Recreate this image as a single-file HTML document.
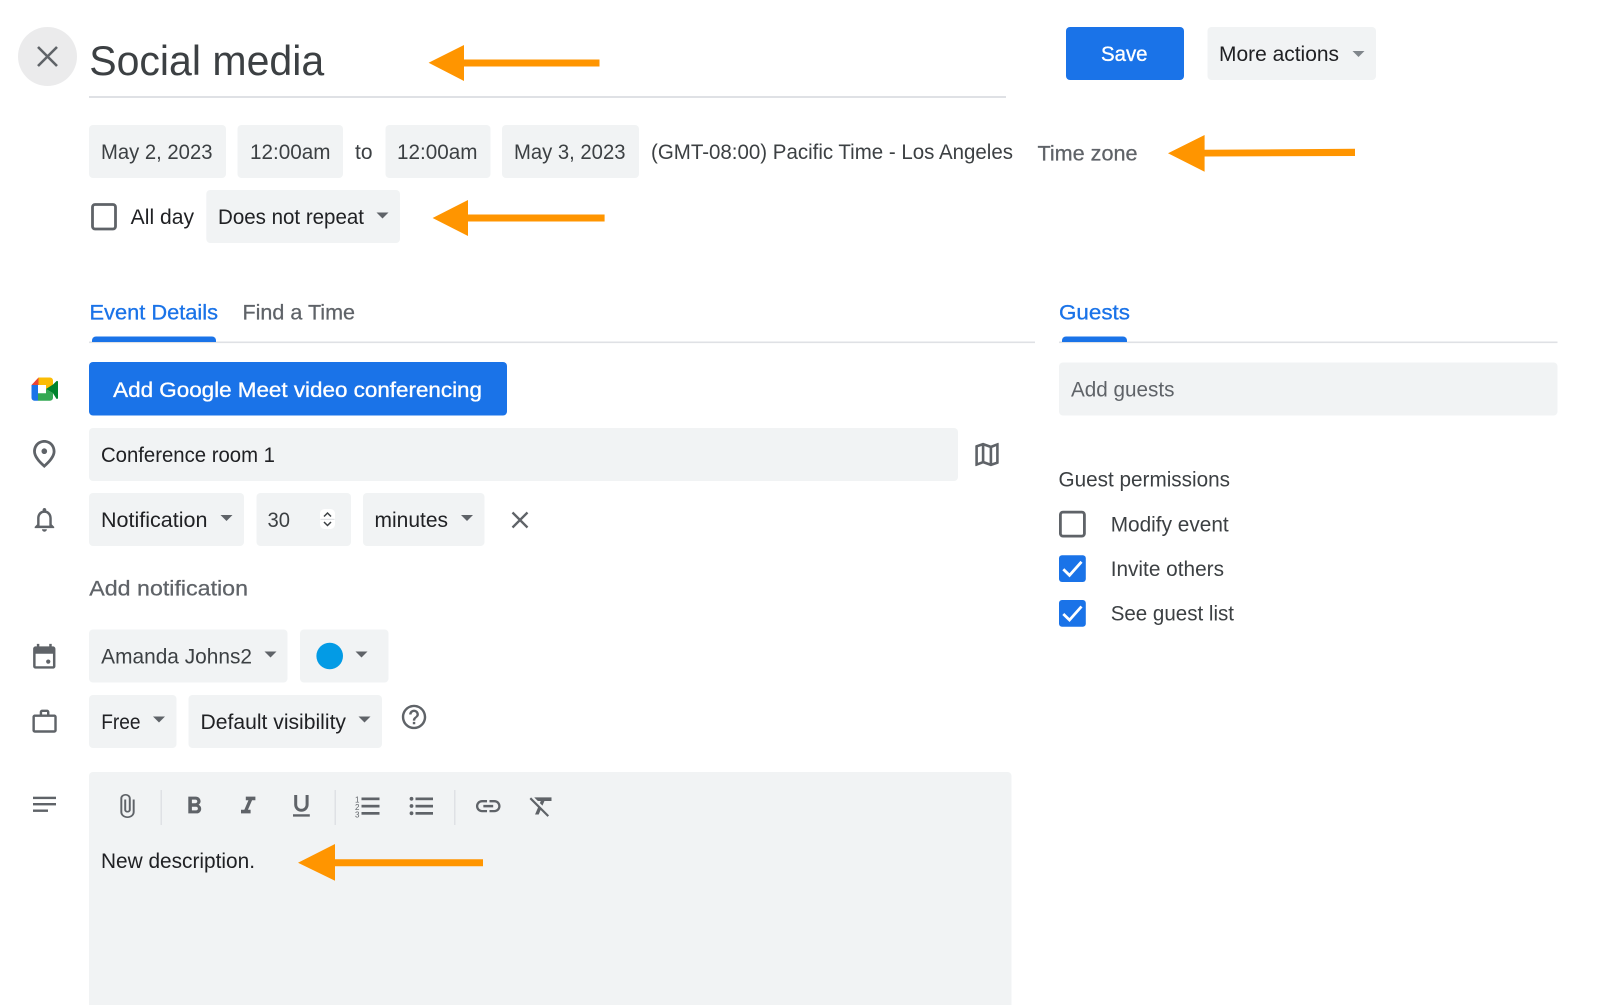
<!DOCTYPE html>
<html lang="en"><head><meta charset="utf-8"><title>Social media</title>
<style>
html,body{margin:0;padding:0;background:#fff;width:1600px;height:1005px;overflow:hidden}
svg{display:block;filter:blur(.35px)}
text{font-family:"Liberation Sans",sans-serif;font-size:20.8px;fill:#3c4043;white-space:pre}
.d{fill:#202124}.g{fill:#5f6368}.b{fill:#1a73e8;stroke:#1a73e8;stroke-width:.3}.w{fill:#fff;stroke:#fff;stroke-width:.35}
.m{stroke:#5f6368;stroke-width:.25}
.c{fill:#f1f3f4}.i{fill:#5f6368}.o{fill:#ff9500}.l{fill:#dfe1e5}
</style></head><body>
<svg width="1600" height="1005" viewBox="0 0 1600 1005" xmlns="http://www.w3.org/2000/svg">
<rect width="1600" height="1005" fill="#fff"/>

<!-- header -->
<circle cx="47.5" cy="56.5" r="29.5" fill="#ebebec"/>
<path d="M38 47l19 19M57 47L38 66" stroke="#5f6368" stroke-width="2.6" fill="none"/>
<text x="89.2" y="75" style="font-size:41.5px" textLength="235" lengthAdjust="spacingAndGlyphs">Social media</text>
<rect x="89" y="96" width="917" height="2" class="l"/>
<rect x="1066" y="27" width="118" height="53" rx="4" fill="#1a73e8"/>
<text x="1101" y="61" class="w" textLength="46.5" lengthAdjust="spacingAndGlyphs">Save</text>
<rect x="1207.500" y="27" width="168.500" height="53" rx="4" class="c"/>
<text x="1219" y="61" class="d" textLength="120" lengthAdjust="spacingAndGlyphs">More actions</text>
<path d="M1352.5 51h12l-6 6z" fill="#80868b"/>

<!-- date row -->
<rect x="89" y="125" width="137" height="53" rx="4" class="c"/>
<text x="101" y="159" textLength="111.5" lengthAdjust="spacingAndGlyphs">May 2, 2023</text>
<rect x="237.500" y="125" width="105.500" height="53" rx="4" class="c"/>
<text x="250" y="159" textLength="80.5" lengthAdjust="spacingAndGlyphs">12:00am</text>
<text x="355" y="159" textLength="17.5" lengthAdjust="spacingAndGlyphs">to</text>
<rect x="385.500" y="125" width="105" height="53" rx="4" class="c"/>
<text x="397" y="159" textLength="80.5" lengthAdjust="spacingAndGlyphs">12:00am</text>
<rect x="502" y="125" width="137" height="53" rx="4" class="c"/>
<text x="514" y="159" textLength="111.5" lengthAdjust="spacingAndGlyphs">May 3, 2023</text>
<text x="651" y="159" textLength="362" lengthAdjust="spacingAndGlyphs">(GMT-08:00) Pacific Time - Los Angeles</text>
<text x="1037.5" y="160.500" class="g m" textLength="100" lengthAdjust="spacingAndGlyphs">Time zone</text>

<!-- all day row -->
<rect x="92.5" y="204.5" width="23" height="24.5" rx="2.5" fill="none" stroke="#5f6368" stroke-width="2.8"/>
<text x="130.700" y="224" class="d" textLength="63.300" lengthAdjust="spacingAndGlyphs">All day</text>
<rect x="206.300" y="190" width="193.700" height="53" rx="4" class="c"/>
<text x="218" y="224" class="d" textLength="146" lengthAdjust="spacingAndGlyphs">Does not repeat</text>
<path d="M376.5 212.5h12l-6 6z" class="i"/>

<!-- tabs -->
<text x="89.500" y="319.5" class="b" textLength="128.500" lengthAdjust="spacingAndGlyphs">Event Details</text>
<text x="242.500" y="319.5" class="g m" textLength="112.500" lengthAdjust="spacingAndGlyphs">Find a Time</text>
<rect x="89" y="341.5" width="946" height="1.600" class="l"/>
<path d="M92 342v-1.5a4 4 0 0 1 4-4h116a4 4 0 0 1 4 4v1.5z" fill="#1a73e8"/>
<text x="1059" y="319.5" class="b" textLength="71" lengthAdjust="spacingAndGlyphs">Guests</text>
<rect x="1059" y="341.5" width="498.5" height="1.600" class="l"/>
<path d="M1062 342v-1.5a4 4 0 0 1 4-4h57a4 4 0 0 1 4 4v1.5z" fill="#1a73e8"/>

<!-- meet -->
<path d="M31.5 385l7-7.500v7.500z" fill="#ea4335"/>
<path d="M31.5 385h6.500v15.700h-3.500a3 3 0 0 1-3-3z" fill="#1a73e8"/>
<path d="M38.500 377.500H50a3 3 0 0 1 3 3v4.500l-7 4.500v-4.500H38.500z" fill="#fbbc04"/>
<path d="M38 393.300H46V389l7 4.300v4.400a3 3 0 0 1-3 3H38z" fill="#34a853"/>
<path d="M46 389l7-4.500 3.300-3.300c.7-.7 1.700-.3 1.700 .8v15.800c0 1.100-1 1.500-1.700 .8L53 393.300z" fill="#00832d"/>
<rect x="89" y="362" width="418" height="53.5" rx="4" fill="#1a73e8"/>
<text x="113.200" y="396.800" class="w" textLength="368.800" lengthAdjust="spacingAndGlyphs">Add Google Meet video conferencing</text>

<!-- location -->
<path transform="translate(27.5 437.200) scale(1.4)" class="i" d="M12 12c-1.1 0-2-.9-2-2s.9-2 2-2 2 .9 2 2-.9 2-2 2zm6-1.8C18 6.57 15.35 4 12 4s-6 2.57-6 6.2c0 2.34 1.95 5.44 6 9.14 4.05-3.7 6-6.8 6-9.14zM12 2c4.2 0 8 3.22 8 8.2 0 3.32-2.67 7.25-8 11.8-5.33-4.55-8-8.48-8-11.8C4 5.22 7.8 2 12 2z"/>
<rect x="89" y="428" width="869" height="53" rx="4" class="c"/>
<text x="101" y="462" class="d" textLength="174" lengthAdjust="spacingAndGlyphs">Conference room 1</text>
<path transform="translate(971.4 438.9) scale(1.3)" class="i" d="M20.5 3l-.16.03L15 5.1 9 3 3.36 4.9c-.21.07-.36.25-.36.48V20.5c0 .28.22.5.5.5l.16-.03L9 18.9l6 2.1 5.64-1.9c.21-.07.36-.25.36-.48V3.5c0-.28-.22-.5-.5-.5zM10 5.47l4 1.4v11.66l-4-1.4V5.47zm-5 .99l3-1.01v11.7l-3 1.16V6.46zm14 11.08l-3 1.01V6.86l3-1.16v11.84z"/>

<!-- notification -->
<path transform="translate(29.8 504.9) scale(1.22)" class="i" d="M12 22c1.1 0 2-.9 2-2h-4c0 1.1.9 2 2 2zm6-6v-5c0-3.07-1.63-5.64-4.5-6.32V4c0-.83-.67-1.5-1.5-1.5s-1.5.67-1.5 1.5v.68C7.64 5.36 6 7.92 6 11v5l-2 2v1h16v-1l-2-2zm-2 1H8v-6c0-2.48 1.51-4.5 4-4.5s4 2.02 4 4.5v6z"/>
<rect x="89" y="493" width="155" height="53" rx="4" class="c"/>
<text x="101" y="527" class="d" textLength="106.500" lengthAdjust="spacingAndGlyphs">Notification</text>
<path d="M220.5 515h12l-6 6z" class="i"/>
<rect x="256.5" y="493" width="94.500" height="53" rx="4" class="c"/>
<text x="267.500" y="527" textLength="22.500" lengthAdjust="spacingAndGlyphs">30</text>
<rect x="320" y="509" width="15" height="20" rx="4.500" fill="#fff"/>
<rect x="320.500" y="518.800" width="14" height="1" fill="#dadce0"/>
<path d="M324 516.500l3.500-3.500 3.500 3.500M324 522l3.500 3.500 3.500-3.500" fill="none" stroke="#3c4043" stroke-width="1.500"/>
<rect x="363" y="493" width="121.500" height="53" rx="4" class="c"/>
<text x="374.500" y="527" class="d" textLength="73.500" lengthAdjust="spacingAndGlyphs">minutes</text>
<path d="M461 515h12l-6 6z" class="i"/>
<path d="M512.500 512.500l15 15M527.500 512.500l-15 15" fill="none" stroke="#5f6368" stroke-width="2.300"/>
<text x="89.300" y="595.300" class="g m" textLength="158.700" lengthAdjust="spacingAndGlyphs">Add notification</text>

<!-- calendar -->
<g transform="translate(29.4 641.4) scale(1.24)" class="i"><path d="M19 4h-1V2h-2v2H8V2H6v2H5c-1.11 0-1.99.9-1.99 2L3 20a2 2 0 0 0 2 2h14c1.100 0 2-.9 2-2V6c0-1.100-.9-2-2-2zm0 16H5V10h14v10z"/><circle cx="15.200" cy="16.300" r="1.700"/></g>
<rect x="89" y="629.500" width="198.500" height="53" rx="4" class="c"/>
<text x="101.200" y="663.300" textLength="150.800" lengthAdjust="spacingAndGlyphs">Amanda Johns2</text>
<path d="M264.500 651.500h12l-6 6z" class="i"/>
<rect x="300" y="629.500" width="88.500" height="53" rx="4" class="c"/>
<circle cx="329.700" cy="656" r="13.300" fill="#039be5"/>
<path d="M355.500 651.500h12l-6 6z" class="i"/>

<!-- availability -->
<path transform="translate(30 707.200) scale(1.215)" class="i" d="M20 6h-4V4c0-1.110-.89-2-2-2h-4c-1.110 0-2 .89-2 2v2H4c-1.110 0-1.990.89-1.990 2L2 19c0 1.110.89 2 2 2h16c1.110 0 2-.89 2-2V8c0-1.110-.89-2-2-2zM10 4h4v2h-4V4zm10 15H4V8h16v11z"/>
<rect x="89" y="695" width="87.500" height="53" rx="4" class="c"/>
<text x="101.200" y="729" class="d" textLength="39.300" lengthAdjust="spacingAndGlyphs">Free</text>
<path d="M153 716.500h12l-6 6z" class="i"/>
<rect x="188.500" y="695" width="193.500" height="53" rx="4" class="c"/>
<text x="200.500" y="729" class="d" textLength="145.500" lengthAdjust="spacingAndGlyphs">Default visibility</text>
<path d="M358.500 716.500h12l-6 6z" class="i"/>
<path transform="translate(399.400 702.300) scale(1.22)" class="i" d="M11 18h2v-2h-2v2zm1-16C6.480 2 2 6.480 2 12s4.480 10 10 10 10-4.480 10-10S17.520 2 12 2zm0 18c-4.410 0-8-3.590-8-8s3.590-8 8-8 8 3.590 8 8-3.590 8-8 8zm0-14c-2.210 0-4 1.790-4 4h2c0-1.100.9-2 2-2s2 .9 2 2c0 2-3 1.750-3 5h2c0-2.250 3-2.500 3-5 0-2.210-1.790-4-4-4z"/>

<!-- description -->
<rect x="33" y="796.700" width="23" height="2.400" class="i"/>
<rect x="33" y="803" width="23" height="2.400" class="i"/>
<rect x="33" y="809.500" width="15" height="2.400" class="i"/>
<path d="M89 1005V776a4 4 0 0 1 4-4h914.500a4 4 0 0 1 4 4v229z" class="c"/>
<path transform="translate(127.500 806) scale(1.3 1.09) translate(-12.500 -12)" class="i" d="M16.500 6v11.500c0 2.210-1.790 4-4 4s-4-1.790-4-4V5c0-1.380 1.120-2.500 2.500-2.500s2.500 1.120 2.500 2.500v10.500c0 .55-.45 1-1 1s-1-.45-1-1V6H10v9.500c0 1.380 1.120 2.500 2.500 2.500s2.500-1.120 2.500-2.500V5c0-2.210-1.790-4-4-4S7 2.790 7 5v12.500c0 3.040 2.460 5.500 5.500 5.500s5.500-2.460 5.500-5.500V6h-1.500z"/>
<rect x="160.500" y="790" width="1.500" height="35" class="l"/>
<path transform="translate(179.900 791.800) scale(1.2)" class="i" d="M15.600 10.790c.97-.67 1.650-1.770 1.650-2.790 0-2.260-1.750-4-4-4H7v14h7.040c2.090 0 3.710-1.700 3.710-3.790 0-1.520-.86-2.820-2.150-3.420zM10 6.500h3c.83 0 1.500.67 1.500 1.500s-.67 1.500-1.500 1.500h-3v-3zm3.500 9H10v-3h3.500c.83 0 1.500.67 1.500 1.500s-.67 1.500-1.500 1.500z"/>
<path transform="translate(233.800 791.800) scale(1.2)" class="i" d="M10 4v3h2.210l-3.420 8H6v3h8v-3h-2.210l3.420-8H18V4z"/>
<path transform="translate(287 791.400) scale(1.2)" class="i" d="M12 17c3.310 0 6-2.690 6-6V3h-2.500v8c0 1.930-1.570 3.500-3.500 3.500S8.500 12.930 8.500 11V3H6v8c0 3.310 2.690 6 6 6zm-7 2v2h14v-2H5z"/>
<rect x="334.500" y="790" width="1.500" height="35" class="l"/>
<text x="355" y="802.500" style="font-size:8px" class="g">1</text>
<text x="355" y="810" style="font-size:8px" class="g">2</text>
<text x="355" y="817.500" style="font-size:8px" class="g">3</text>
<rect x="361.500" y="797.500" width="18" height="2.700" class="i"/>
<rect x="361.500" y="804.800" width="18" height="2.700" class="i"/>
<rect x="361.500" y="812" width="18" height="2.700" class="i"/>
<circle cx="411.500" cy="798.800" r="1.900" class="i"/>
<circle cx="411.500" cy="806" r="1.900" class="i"/>
<circle cx="411.500" cy="813.300" r="1.900" class="i"/>
<rect x="415.500" y="797.500" width="17.500" height="2.700" class="i"/>
<rect x="415.500" y="804.800" width="17.500" height="2.700" class="i"/>
<rect x="415.500" y="812" width="17.500" height="2.700" class="i"/>
<rect x="454" y="790" width="1.500" height="35" class="l"/>
<path transform="translate(473.500 791.400) scale(1.23)" class="i" d="M3.900 12c0-1.710 1.390-3.100 3.100-3.100h4V7H7c-2.760 0-5 2.240-5 5s2.240 5 5 5h4v-1.900H7c-1.710 0-3.100-1.390-3.100-3.100zM8 13h8v-2H8v2zm9-6h-4v1.900h4c1.710 0 3.100 1.390 3.100 3.100s-1.390 3.100-3.100 3.100h-4V17h4c2.760 0 5-2.240 5-5s-2.240-5-5-5z"/>
<path transform="translate(527.100 791.300) scale(1.22)" class="i" d="M3.270 5L2 6.270l6.970 6.970L6.500 19h3l1.570-3.660L16.730 21 18 19.730 3.550 5.270 3.270 5zM6 5v.18L8.820 8h2.400l-.72 1.680 2.100 2.100L14.210 8H20V5H6z"/>
<text x="101" y="868" class="d" textLength="154" lengthAdjust="spacingAndGlyphs">New description.</text>

<!-- guests -->
<rect x="1059" y="362.500" width="498.500" height="53" rx="4" class="c"/>
<text x="1071" y="396.500" class="g" textLength="103.500" lengthAdjust="spacingAndGlyphs">Add guests</text>
<text x="1058.500" y="486.500" textLength="171.500" lengthAdjust="spacingAndGlyphs">Guest permissions</text>
<rect x="1060.400" y="512.100" width="24" height="24" rx="2.500" fill="none" stroke="#5f6368" stroke-width="2.800"/>
<text x="1110.700" y="531.500" textLength="118" lengthAdjust="spacingAndGlyphs">Modify event</text>
<rect x="1059" y="555.300" width="26.800" height="26.700" rx="3" fill="#1a73e8"/>
<path d="M1063.300 569.300l6.200 6 12-13.500" fill="none" stroke="#fff" stroke-width="2.800"/>
<text x="1110.700" y="576" textLength="113.300" lengthAdjust="spacingAndGlyphs">Invite others</text>
<rect x="1059" y="600" width="26.800" height="26.700" rx="3" fill="#1a73e8"/>
<path d="M1063.300 614l6.200 6 12-13.500" fill="none" stroke="#fff" stroke-width="2.800"/>
<text x="1110.700" y="620.500" textLength="123.300" lengthAdjust="spacingAndGlyphs">See guest list</text>

<!-- arrows -->
<path class="o" d="M428.600 62.700L464 45v14.500h135.500v7H464V81z"/>
<path class="o" d="M432.600 218L468 200v14.500h136.600v7H468V236z"/>
<path class="o" d="M1168 153.300L1204.600 135v14.800l150.400-1v7.200l-150.400 .5v15.200z"/>
<path class="o" d="M298 862.700L335 844v15.200h148v7H335v14.500z"/>
</svg>
</body></html>
